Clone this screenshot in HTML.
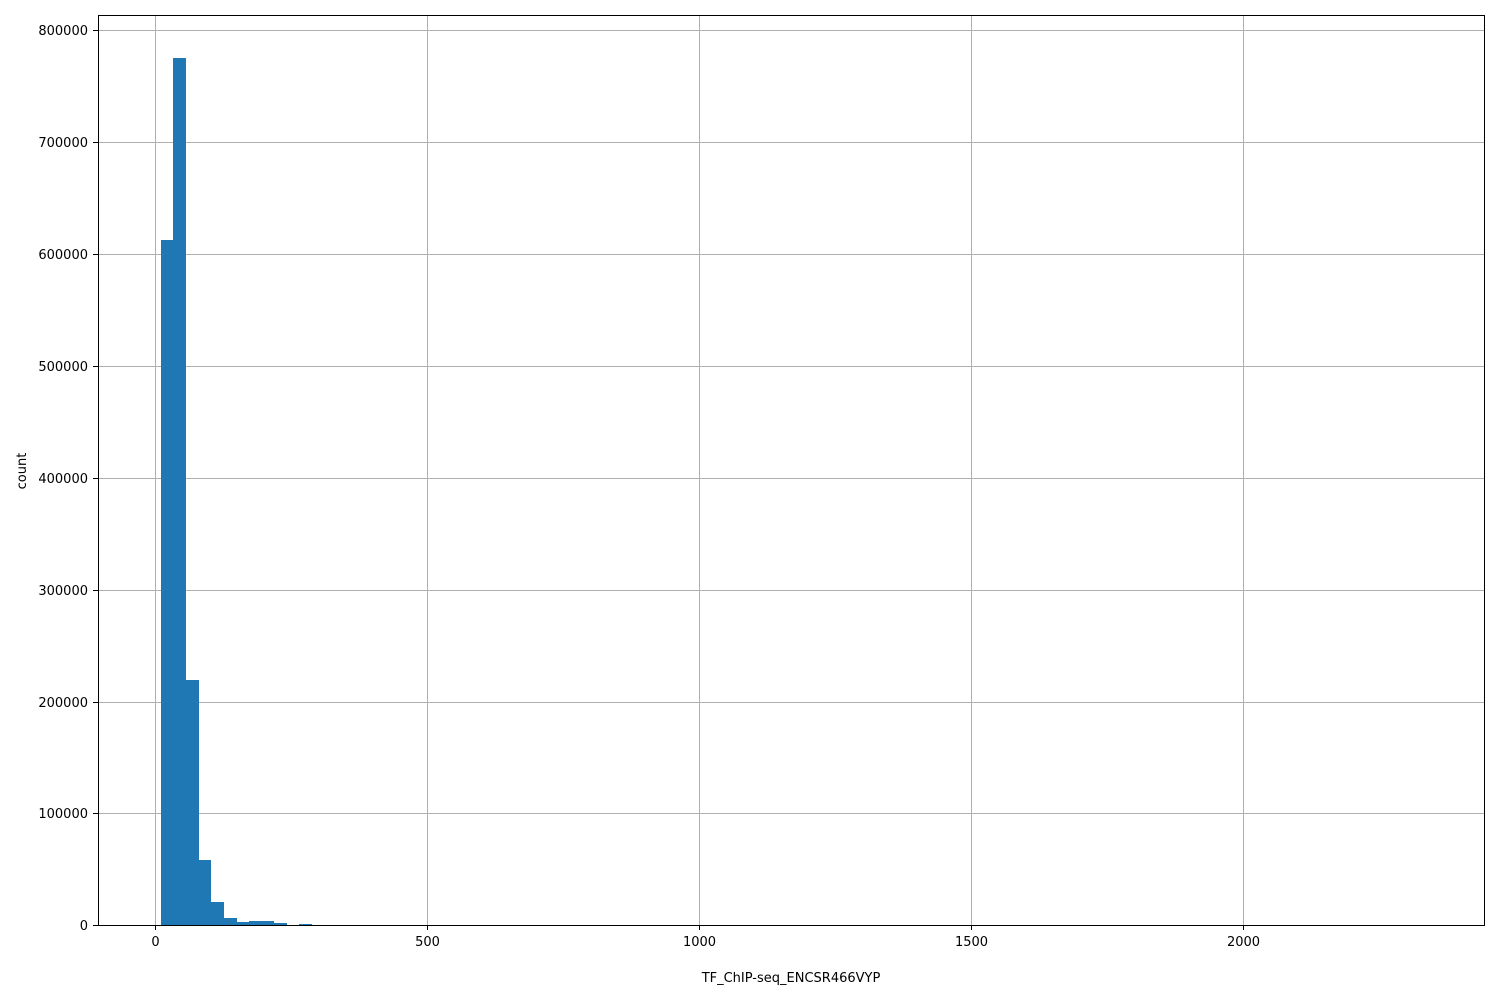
<!DOCTYPE html>
<html><head><style>body{margin:0;background:#fff}svg{display:block}text{font-family:"DejaVu Sans","Liberation Sans",sans-serif;font-size:13px;fill:#000}</style></head>
<body>
<svg width="1500" height="1000" xmlns="http://www.w3.org/2000/svg">
<rect width="1500" height="1000" fill="#fff"/>
<g stroke="#b0b0b0" stroke-width="1">
<line x1="155.5" y1="15" x2="155.5" y2="925"/>
<line x1="427.5" y1="15" x2="427.5" y2="925"/>
<line x1="699.5" y1="15" x2="699.5" y2="925"/>
<line x1="971.5" y1="15" x2="971.5" y2="925"/>
<line x1="1243.5" y1="15" x2="1243.5" y2="925"/>
<line x1="98" y1="30.5" x2="1485" y2="30.5"/>
<line x1="98" y1="142.5" x2="1485" y2="142.5"/>
<line x1="98" y1="254.5" x2="1485" y2="254.5"/>
<line x1="98" y1="366.5" x2="1485" y2="366.5"/>
<line x1="98" y1="478.5" x2="1485" y2="478.5"/>
<line x1="98" y1="590.5" x2="1485" y2="590.5"/>
<line x1="98" y1="702.5" x2="1485" y2="702.5"/>
<line x1="98" y1="813.5" x2="1485" y2="813.5"/>
</g>
<g fill="#1f77b4" shape-rendering="crispEdges">
<rect x="161" y="240" width="13" height="685"/>
<rect x="173" y="58" width="13" height="867"/>
<rect x="186" y="680" width="13" height="245"/>
<rect x="198" y="860" width="13" height="65"/>
<rect x="211" y="902" width="13" height="23"/>
<rect x="224" y="918" width="13" height="7"/>
<rect x="236" y="922" width="13" height="3"/>
<rect x="249" y="921" width="25" height="4"/>
<rect x="274" y="923" width="13" height="2"/>
<rect x="299" y="924" width="13" height="1"/>
</g>
<rect x="98.5" y="15.5" width="1386" height="910" fill="none" stroke="#000" stroke-width="1"/>
<g stroke="#000">
<line x1="155.5" y1="925" x2="155.5" y2="930"/>
<line x1="427.5" y1="925" x2="427.5" y2="930"/>
<line x1="699.5" y1="925" x2="699.5" y2="930"/>
<line x1="971.5" y1="925" x2="971.5" y2="930"/>
<line x1="1243.5" y1="925" x2="1243.5" y2="930"/>
<line x1="93" y1="30.5" x2="98" y2="30.5"/>
<line x1="93" y1="142.5" x2="98" y2="142.5"/>
<line x1="93" y1="254.5" x2="98" y2="254.5"/>
<line x1="93" y1="366.5" x2="98" y2="366.5"/>
<line x1="93" y1="478.5" x2="98" y2="478.5"/>
<line x1="93" y1="590.5" x2="98" y2="590.5"/>
<line x1="93" y1="702.5" x2="98" y2="702.5"/>
<line x1="93" y1="813.5" x2="98" y2="813.5"/>
<line x1="93" y1="925.5" x2="98" y2="925.5"/>
</g>
<g text-anchor="middle">
<text x="155.5" y="946">0</text>
<text x="427.5" y="946">500</text>
<text x="699.5" y="946">1000</text>
<text x="971.5" y="946">1500</text>
<text x="1243.5" y="946">2000</text>
<text x="791" y="982">TF_ChIP-seq_ENCSR466VYP</text>
</g>
<g text-anchor="end">
<text x="88" y="35">800000</text>
<text x="88" y="147">700000</text>
<text x="88" y="259">600000</text>
<text x="88" y="371">500000</text>
<text x="88" y="483">400000</text>
<text x="88" y="595">300000</text>
<text x="88" y="707">200000</text>
<text x="88" y="818">100000</text>
<text x="88" y="930">0</text>
</g>
<text x="26" y="471" text-anchor="middle" transform="rotate(-90 26 471)">count</text>
</svg>
</body></html>
